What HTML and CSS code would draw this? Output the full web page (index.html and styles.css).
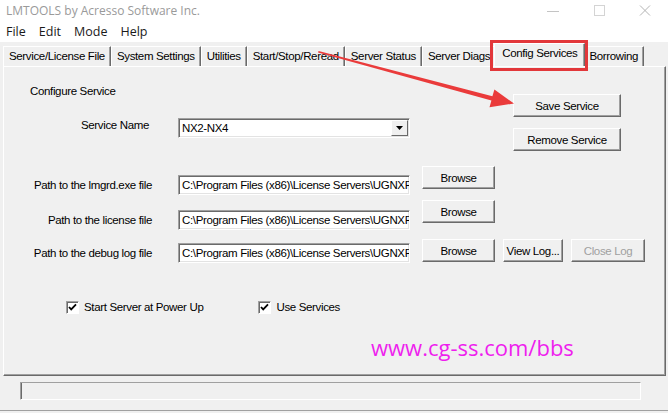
FILE: index.html
```html
<!DOCTYPE html>
<html lang="en">

<head>
  <meta charset="UTF-8">
  <title>LMTOOLS</title>
  <link rel="stylesheet" href="styles.css">
</head>

<body>
  <div class="window">
    <!--标题栏-->
    <div class="titlebar">
      <span class="title">LMTOOLS by Acresso Software Inc.</span>
      <div class="controls">
        <span class="ctl"><svg width="14" height="14" viewBox="0 0 14 14"><path d="M1 7.5h12" stroke="#c4c4c4" stroke-width="1" fill="none"/></svg></span>
        <span class="ctl"><svg width="14" height="14" viewBox="0 0 14 14"><rect x="2.5" y="1.5" width="10" height="10" stroke="#d4d4d4" fill="none"/></svg></span>
        <span class="ctl"><svg width="14" height="14" viewBox="0 0 14 14"><path d="M2 1.5l10 10M12 1.5l-10 10" stroke="#b4b4b4" fill="none"/></svg></span>
      </div>
    </div>
    <!--菜单-->
    <ul class="menubar">
      <li>File</li>
      <li>Edit</li>
      <li>Mode</li>
      <li>Help</li>
    </ul>
    <!--选项卡-->
    <div class="tabs">
      <span class="tab">Service/License File</span>
      <span class="tab">System Settings</span>
      <span class="tab">Utilities</span>
      <span class="tab">Start/Stop/Reread</span>
      <span class="tab">Server Status</span>
      <span class="tab">Server Diags</span>
      <span class="tab current">Config Services</span>
      <span class="tab">Borrowing</span>
    </div>
    <div class="panel">
      <div class="top">
        <div class="left">
          <div class="caption">Configure Service</div>
          <div class="row service">
            <label class="name-label">Service Name</label>
            <div class="combo">
              <span class="value">NX2-NX4</span>
              <span class="drop"><svg width="7" height="4" viewBox="0 0 7 4"><path d="M0 0h7L3.5 4z" fill="#000"/></svg></span>
            </div>
          </div>
        </div>
        <div class="right">
          <button class="btn wide">Save Service</button>
          <button class="btn wide">Remove Service</button>
        </div>
      </div>
      <div class="row path row-a">
        <label class="path-label">Path to the lmgrd.exe file</label>
        <div class="field">C:\Program Files (x86)\License Servers\UGNXF</div>
        <button class="btn browse">Browse</button>
      </div>
      <div class="row path row-b">
        <label class="path-label">Path to the license file</label>
        <div class="field">C:\Program Files (x86)\License Servers\UGNXF</div>
        <button class="btn browse">Browse</button>
      </div>
      <div class="row path row-c">
        <label class="path-label">Path to the debug log file</label>
        <div class="field">C:\Program Files (x86)\License Servers\UGNXF</div>
        <button class="btn browse">Browse</button>
        <button class="btn view">View Log...</button>
        <button class="btn close" disabled>Close Log</button>
      </div>
      <div class="checks">
        <span class="check"><span class="box"><svg width="9" height="9" viewBox="0 0 9 9"><path d="M1 4l2.2 2.4L8 1.4" stroke="#000" stroke-width="1.8" fill="none"/></svg></span>Start Server at Power Up</span>
        <span class="check second"><span class="box"><svg width="9" height="9" viewBox="0 0 9 9"><path d="M1 4l2.2 2.4L8 1.4" stroke="#000" stroke-width="1.8" fill="none"/></svg></span>Use Services</span>
      </div>
      <div class="mark">www.cg-ss.com/bbs</div>
    </div>
    <!--状态栏-->
    <div class="status"></div>
    <div class="footer"></div>

    <!--标注: 红框和箭头-->
    <svg class="note" width="668" height="413" viewBox="0 0 668 413">
      <rect x="491.5" y="41.5" width="95" height="28" fill="none" stroke="#e2373a" stroke-width="3"/>
      <polygon points="318,52.5 318.6,51 492.4,96.3 494.4,89.6 514,103.5 489.5,107.3 491.4,100.6" fill="#ea3b3b"/>
    </svg>
  </div>
</body>

</html>
```

FILE: styles.css
```css
* {
  margin: 0;
  padding: 0;
  box-sizing: border-box
}

ul {
  list-style: none
}

body {
  background-color: #f0f0f0;
  font-family: "Liberation Sans", Arial, sans-serif;
  font-size: 11.5px;
  letter-spacing: -0.35px;
  color: #000;
}

.window {
  width: 668px;
  height: 413px;
  overflow: hidden;
  position: relative;
}

.titlebar {
  height: 21px;
  background-color: #fff;
  display: flex;
  align-items: center;
  padding-left: 6px;
  letter-spacing: 0;
}

.title {
  font-family: "Open Sans", "Liberation Sans", sans-serif;
  font-size: 12px;
  color: #9a9a9a;
  flex: 1;
}

.controls {
  display: flex;
  align-self: flex-start;
}

.ctl {
  width: 46px;
  height: 21px;
  display: flex;
  align-items: center;
  justify-content: center;
}

.menubar {
  height: 21px;
  background-color: #fff;
  display: flex;
  align-items: center;
  padding-left: 6px;
  font-family: "Open Sans", "Liberation Sans", sans-serif;
  font-size: 12.5px;
  letter-spacing: 0;
  color: #1a1a1a;
}

.menubar li {
  margin-right: 13px;
}

.tabs {
  display: flex;
  align-items: flex-end;
  height: 24px;
  padding-left: 3px;
}

.tab {
  height: 20px;
  line-height: 19px;
  padding: 0 5px;
  border-left: 1px solid #fff;
  border-top: 1px solid #fff;
  border-right: 1px solid #6a6a6a;
  box-shadow: inset -1px 0 #a0a0a0;
  white-space: nowrap;
}

.tab.current {
  height: 23px;
  line-height: 19px;
  padding: 0 7px;
  margin: 0 -2px;
  position: relative;
  z-index: 1;
  background-color: #f0f0f0;
}

.panel {
  height: 310px;
  margin: 0 2px 0 3px;
  border-top: 1px solid #fff;
  border-left: 1px solid #fff;
  border-right: 1px solid #6a6a6a;
  border-bottom: 1px solid #6a6a6a;
  box-shadow: inset -1px -1px #a0a0a0;
  padding: 17px 0 0 26px;
  position: relative;
}

.top {
  display: flex;
}

.left {
  width: 380px;
  flex: none;
}

.caption {
  height: 14px;
  line-height: 14px;
}

.row {
  display: flex;
  align-items: flex-start;
}

.service {
  margin-top: 20px;
}

.name-label {
  width: 148px;
  padding-left: 51px;
  line-height: 15px;
  flex: none;
}

.combo,
.field {
  width: 232px;
  height: 20px;
  flex: none;
  background-color: #fff;
  border: 1px solid;
  border-color: #a0a0a0 #fff #fff #a0a0a0;
  box-shadow: inset 1px 1px #6a6a6a, inset -1px -1px #e3e3e3;
  line-height: 18px;
  padding-left: 3px;
  overflow: hidden;
  white-space: nowrap;
}

.combo {
  display: flex;
  justify-content: space-between;
}

.drop {
  width: 17px;
  height: 16px;
  margin: 1px 1px 0 0;
  background-color: #f0f0f0;
  border: 1px solid;
  border-color: #fff #6a6a6a #6a6a6a #fff;
  display: flex;
  align-items: center;
  justify-content: center;
}

.right {
  margin: 10px 0 0 103px;
  display: flex;
  flex-direction: column;
  gap: 11px;
}

.btn {
  height: 23px;
  flex: none;
  font-family: inherit;
  font-size: 11.5px;
  letter-spacing: -0.35px;
  color: #000;
  background-color: #f0f0f0;
  border: 1px solid;
  border-color: #fff #6a6a6a #6a6a6a #fff;
  box-shadow: inset -1px -1px #a0a0a0;
  white-space: nowrap;
}

.btn.wide {
  width: 108px;
}

.btn.browse {
  width: 73px;
  margin-left: 12px;
}

.btn.view {
  width: 60px;
  margin-left: 8px;
}

.btn.close {
  width: 74px;
  margin-left: 8px;
  color: #a0a0a0;
}

.path-label {
  width: 148px;
  flex: none;
  padding-right: 26px;
  text-align: right;
  line-height: 20px;
  white-space: nowrap;
}

.row-a {
  margin-top: 15px;
}

.row-a .path-label,
.row-a .field {
  margin-top: 9px;
}

.row-b {
  margin-top: 5px;
}

.row-b .path-label,
.row-b .field {
  margin-top: 10px;
}

.row-c {
  margin-top: 9px;
}

.row-c .path-label,
.row-c .field {
  margin-top: 4px;
}

.checks {
  margin-top: 37px;
  padding-left: 36px;
  display: flex;
  line-height: 14px;
}

.check {
  display: flex;
  align-items: center;
}

.check.second {
  margin-left: 55px;
}

.box {
  width: 13px;
  height: 13px;
  margin-right: 5px;
  background-color: #fff;
  border: 1px solid;
  border-color: #a0a0a0 #fff #fff #a0a0a0;
  box-shadow: inset 1px 1px #6a6a6a;
  display: flex;
  align-items: center;
  justify-content: center;
}

.mark {
  margin: 18px 0 0 341px;
  font-family: "Open Sans", "Noto Sans", sans-serif;
  font-size: 22px;
  line-height: 30px;
  letter-spacing: 0;
  color: #ee1fee;
}

.status {
  width: 621px;
  height: 18px;
  margin: 6px 0 0 20px;
  border: 1px solid;
  border-color: #a0a0a0 #fff #fff #a0a0a0;
  box-shadow: inset 1px 0 #6a6a6a;
}

.footer {
  margin-top: 10px;
  border-top: 1px solid #a0a0a0;
}

.note {
  position: absolute;
  left: 0;
  top: 0;
  pointer-events: none;
}
```
